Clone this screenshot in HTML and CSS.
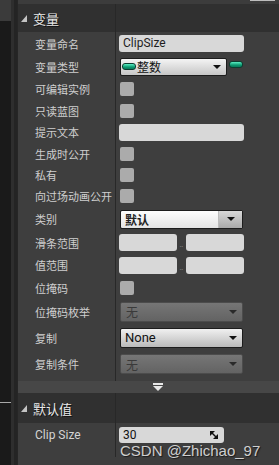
FILE: index.html
```html
<!DOCTYPE html>
<html lang="zh-CN">
<head>
    <meta charset="UTF-8">
    <title>变量</title>
    <link rel="stylesheet" href="styles.css">
</head>
<body>
<div class="screen">
    <div class="graph">
        <div class="graph-view">
            <div class="graph-tab"></div>
        </div>
        <div class="graph-edge"></div>
    </div>

    <div class="details">
        <div class="top-strip"><span class="top-btn"></span></div>

        <div class="cat-head">
            <div class="cat-title">
                <svg class="tri" width="6" height="7" viewBox="0 0 6 7"><polygon points="6,0 6,7 0,7" fill="#c4c4c4"/></svg>
                <span>变量</span>
            </div>
        </div>

        <div class="row h23">
            <div class="name">变量命名</div>
            <div class="value"><div class="textbox wide">ClipSize</div></div>
        </div>
        <div class="row h23">
            <div class="name">变量类型</div>
            <div class="value">
                <div class="combo type">
                    <span class="pill"></span>
                    <span class="combo-text">整数</span>
                    <span class="arrow"></span>
                </div>
                <span class="pill pin"></span>
            </div>
        </div>
        <div class="row h22">
            <div class="name">可编辑实例</div>
            <div class="value"><span class="check"></span></div>
        </div>
        <div class="row h21">
            <div class="name">只读蓝图</div>
            <div class="value"><span class="check"></span></div>
        </div>
        <div class="row h22">
            <div class="name">提示文本</div>
            <div class="value"><div class="textbox wide"></div></div>
        </div>
        <div class="row h21">
            <div class="name">生成时公开</div>
            <div class="value"><span class="check"></span></div>
        </div>
        <div class="row h21">
            <div class="name">私有</div>
            <div class="value"><span class="check"></span></div>
        </div>
        <div class="row h22">
            <div class="name">向过场动画公开</div>
            <div class="value"><span class="check"></span></div>
        </div>
        <div class="row h24">
            <div class="name">类别</div>
            <div class="value">
                <div class="combo split">
                    <span class="combo-text bold">默认</span>
                    <span class="split-btn"><span class="arrow"></span></span>
                </div>
            </div>
        </div>
        <div class="row h23">
            <div class="name">滑条范围</div>
            <div class="value range">
                <div class="textbox half"></div>
                <span class="dots">‥</span>
                <div class="textbox half"></div>
            </div>
        </div>
        <div class="row h22">
            <div class="name">值范围</div>
            <div class="value range">
                <div class="textbox half"></div>
                <span class="dots">‥</span>
                <div class="textbox half"></div>
            </div>
        </div>
        <div class="row h23">
            <div class="name">位掩码</div>
            <div class="value"><span class="check"></span></div>
        </div>
        <div class="row h25">
            <div class="name">位掩码枚举</div>
            <div class="value">
                <div class="combo off"><span class="combo-text">无</span><span class="arrow"></span></div>
            </div>
        </div>
        <div class="row h27">
            <div class="name">复制</div>
            <div class="value">
                <div class="combo plain"><span class="combo-text latin">None</span><span class="arrow"></span></div>
            </div>
        </div>
        <div class="row h30 last">
            <div class="name">复制条件</div>
            <div class="value">
                <div class="combo off"><span class="combo-text">无</span><span class="arrow"></span></div>
            </div>
        </div>

        <div class="advanced">
            <svg width="10" height="8" viewBox="0 0 10 8"><rect x="0" y="0" width="10" height="2" fill="#e8e8e8"/><polygon points="0,3 10,3 5,8" fill="#e8e8e8"/></svg>
        </div>

        <div class="cat-head second">
            <div class="cat-title">
                <svg class="tri" width="6" height="7" viewBox="0 0 6 7"><polygon points="6,0 6,7 0,7" fill="#c4c4c4"/></svg>
                <span>默认值</span>
            </div>
        </div>

        <div class="row clip">
            <div class="name latin-label">Clip Size</div>
            <div class="value">
                <div class="textbox spin">
                    <span>30</span>
                    <svg width="8" height="8" viewBox="0 0 8 8"><polygon points="0,0 5,0 0,5" fill="#111"/><polygon points="8,3 8,8 3,8" fill="#111"/><line x1="1" y1="1" x2="7" y2="7" stroke="#111" stroke-width="1.4"/></svg>
                </div>
            </div>
        </div>
    </div>

    <div class="watermark">CSDN @Zhichao_97</div>
</div>
</body>
</html>
```

FILE: styles.css
```css
* {
    box-sizing: border-box;
}

body {
    margin: 0;
    background-color: #1b1b1b;
    font-family: Roboto, "Noto Sans CJK SC", sans-serif;
}

.screen {
    position: relative;
    display: flex;
    width: 279px;
    height: 465px;
    overflow: hidden;
}

/* blueprint graph behind the panel */
.graph {
    display: flex;
    width: 17px;
}

.graph-view {
    width: 11px;
    background: linear-gradient(to bottom, #1a1a1a 402px, #a8a8a8 402px, #a8a8a8 403px, #1a1a1a 403px);
    background-color: #1a1a1a;
    padding-top: 0;
}

.graph-tab {
    height: 21px;
    background-color: #3b3b3b;
}

.graph-edge {
    flex: 1;
    background: linear-gradient(to right, #2e2e2e 3px, #242424 3px);
}

/* details panel */
.details {
    flex: 1;
    background-color: #3e3e3e;
    border-left: 1px solid #262626;
    color: #cfcfcf;
}

.top-strip {
    display: flex;
    justify-content: flex-end;
    height: 4px;
    padding-right: 4px;
    background-color: #3c3c3c;
}

.top-btn {
    width: 25px;
    height: 1px;
    background-color: #bdbdbd;
}

.cat-head {
    display: flex;
    height: 28px;
    background-color: #303030;
}

.cat-head.second {
    height: 30px;
}

.cat-title {
    display: flex;
    align-items: center;
    width: 98px;
    padding-left: 3px;
    border-right: 1px solid #282828;
    color: #e8e8e8;
    font-size: 13px;
    text-shadow: 1px 1px 0 #111;
}

.tri {
    margin-right: 6px;
    margin-top: 1px;
}

.row {
    display: flex;
}

.h21 { height: 21px; }
.h22 { height: 22px; }
.h23 { height: 23px; }
.h24 { height: 24px; }
.h25 { height: 25px; }
.h27 { height: 27px; }
.h30 { height: 30px; }

.name {
    display: flex;
    align-items: center;
    width: 98px;
    padding-left: 17px;
    border-right: 1px solid #282828;
    font-size: 11px;
    white-space: nowrap;
}

.value {
    display: flex;
    align-items: center;
    padding-left: 3px;
}

.row.last .name,
.row.last .value {
    padding-bottom: 4px;
}

.textbox {
    height: 17px;
    background-color: #d8d8d8;
    border-radius: 3px;
    color: #1e1e1e;
    font-size: 12px;
    line-height: 17px;
    padding-left: 4px;
}

.textbox.wide {
    width: 125px;
}

.textbox.half {
    width: 58px;
    height: 17px;
}

.range .dots {
    width: 9px;
    text-align: center;
    font-size: 8px;
    color: #8e8e8e;
    margin-top: 4px;
}

.check {
    width: 14px;
    height: 14px;
    margin-left: 1px;
    background-color: #ababab;
    border-radius: 2px;
}

.combo {
    position: relative;
    display: flex;
    align-items: center;
    width: 123px;
    height: 19px;
    margin-left: 1px;
    border: 1px solid #1c1c1c;
    border-radius: 2px;
    color: #111;
    font-size: 12px;
}

.combo-text {
    flex: 1;
    padding-left: 5px;
}

.combo-text.latin {
    font-size: 13px;
    padding-left: 4px;
}

.combo-text.bold {
    font-weight: bold;
    color: #222;
}

.arrow {
    width: 0;
    height: 0;
    margin-right: 5px;
    border-left: 4px solid transparent;
    border-right: 4px solid transparent;
    border-top: 4px solid #111;
}

.combo.type {
    width: 107px;
    height: 18px;
    background: linear-gradient(#f4f4f4, #c6c6c6);
}

.combo.type .combo-text {
    padding-left: 1px;
}

.pill {
    width: 14px;
    height: 7px;
    margin-left: 1px;
    border-radius: 3px;
    background: linear-gradient(#5cf0c4, #0d9a72 60%, #0a7a5a);
    border: 1px solid #0b3d30;
}

.pin {
    margin-left: 2px;
    margin-top: -4px;
}

.combo.split {
    background: linear-gradient(#fdfdfd, #e4e4e4);
}

.combo.split .combo-text {
    padding-left: 4px;
}

.split-btn {
    display: flex;
    align-items: center;
    justify-content: center;
    width: 24px;
    height: 100%;
    background: linear-gradient(#d8d8d8, #a9a9a9);
    border-left: 1px solid #bbb;
}

.split-btn .arrow {
    margin-right: 0;
}

.combo.off {
    height: 20px;
    background: linear-gradient(#767676, #636363);
    border-color: #4c4c4c;
    color: #3a3a3a;
}

.combo.off .arrow {
    border-top-color: #2a2a2a;
}

.combo.plain {
    height: 20px;
    background: linear-gradient(#f0f0f0, #bababa);
}

.advanced {
    display: flex;
    align-items: center;
    height: 12px;
    padding-left: 135px;
    background-color: #474747;
}

.row.clip {
    height: 34px;
}

.row.clip .name,
.row.clip .value {
    align-items: flex-start;
    padding-top: 4px;
}

.latin-label {
    font-size: 12px;
    line-height: 16px;
    color: #d4d4d4;
}

.textbox.spin {
    display: flex;
    align-items: center;
    justify-content: space-between;
    width: 105px;
    height: 16px;
    padding-right: 6px;
    font-size: 12px;
    color: #111;
}

.watermark {
    position: absolute;
    left: 120px;
    top: 442px;
    font-family: "Liberation Sans", sans-serif;
    font-size: 15px;
    color: #cfcfcf;
    text-shadow: 1px 1px 1px #1a1a1a;
    letter-spacing: 0;
}
```
